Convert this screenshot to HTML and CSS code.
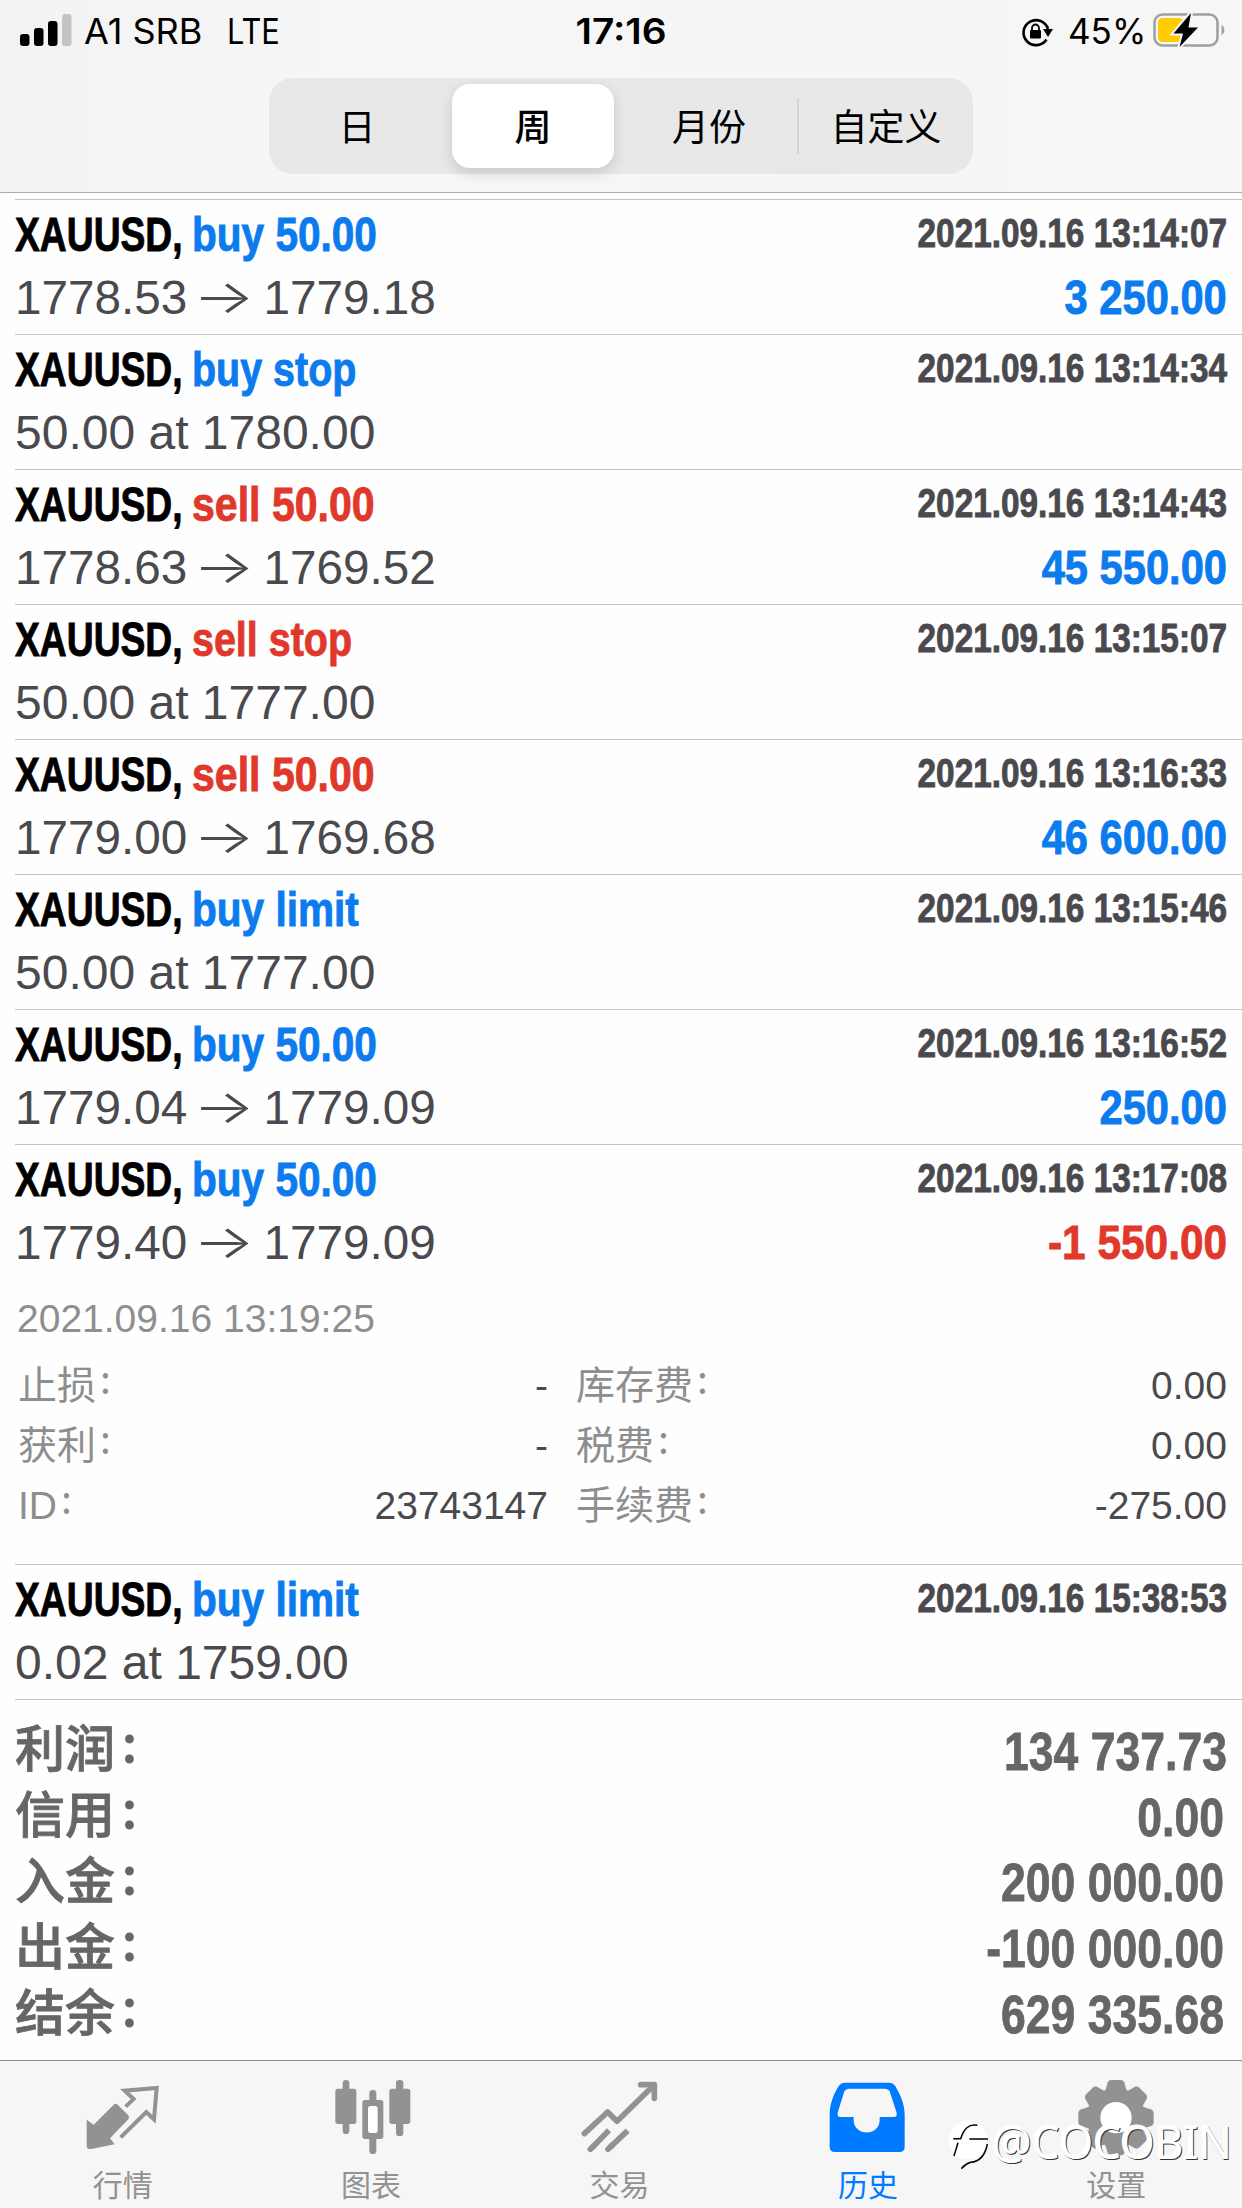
FILE: index.html
```html
<!DOCTYPE html>
<html lang="zh-CN">
<head>
<meta charset="utf-8">
<title>历史</title>
<link rel="stylesheet" href="styles.css">
</head>
<body>
<div class="app">
  <header class="top">
    <div class="status">
      <div class="status-left">
        <svg class="signal" viewBox="0 0 52 32"><rect x="0" y="20" width="9.5" height="12" rx="3"/><rect x="14" y="14" width="9.5" height="18" rx="3"/><rect x="28" y="7" width="9.5" height="25" rx="3"/><rect x="42" y="0" width="9.5" height="32" rx="3" fill="#c4c4c4"/></svg>
        <span class="carrier">A1 SRB</span><span class="network">LTE</span>
      </div>
      <div class="clock">17:16</div>
      <div class="status-right">
        <svg class="lock" viewBox="0 0 32 30"><path d="M25.5 22.5A12.5 12.5 0 1 1 27 12" fill="none" stroke="#000" stroke-width="2.6"/><path d="M22 12h10l-5 8z"/><rect x="9" y="13" width="11" height="8.500" rx="1"/><path d="M11 14v-3a3.500 3.500 0 0 1 7 0v3" fill="none" stroke="#000" stroke-width="1.8"/></svg>
        <span class="percent">45%</span>
        <svg class="battery" viewBox="0 0 74 36"><rect x="1.500" y="2.500" width="63" height="31" rx="8" fill="none" stroke="#a0a0a0" stroke-width="2.600"/><path d="M68.500 12.500q6 5.500 0 11z" fill="#a0a0a0"/><rect x="5" y="6" width="25" height="24" rx="4.500" fill="#ffcc00"/><path d="M38 1 20.500 21.500h9.500L26.500 35 45 15.500h-9.500z" stroke="#f6f6f6" stroke-width="4" paint-order="stroke"/></svg>
      </div>
    </div>
    <nav class="segments">
      <span class="seg">日</span><span class="seg seg-on">周</span><span class="seg">月份</span><span class="seg seg-split">自定义</span>
    </nav>
  </header>

  <main class="list">
    <section class="deal"><div class="line"><span class="symbol">XAUUSD,</span><span class="side buy">buy 50.00</span><time class="time">2021.09.16 13:14:07</time></div><div class="line"><span class="price">1778.53<i class="to">→</i>1779.18</span><span class="profit buy">3 250.00</span></div></section>
    <section class="deal"><div class="line"><span class="symbol">XAUUSD,</span><span class="side pending buy">buy stop</span><time class="time">2021.09.16 13:14:34</time></div><div class="line"><span class="price order">50.00 at 1780.00</span></div></section>
    <section class="deal"><div class="line"><span class="symbol">XAUUSD,</span><span class="side sell">sell 50.00</span><time class="time">2021.09.16 13:14:43</time></div><div class="line"><span class="price">1778.63<i class="to">→</i>1769.52</span><span class="profit buy">45 550.00</span></div></section>
    <section class="deal"><div class="line"><span class="symbol">XAUUSD,</span><span class="side pending sell">sell stop</span><time class="time">2021.09.16 13:15:07</time></div><div class="line"><span class="price order">50.00 at 1777.00</span></div></section>
    <section class="deal"><div class="line"><span class="symbol">XAUUSD,</span><span class="side sell">sell 50.00</span><time class="time">2021.09.16 13:16:33</time></div><div class="line"><span class="price">1779.00<i class="to">→</i>1769.68</span><span class="profit buy">46 600.00</span></div></section>
    <section class="deal"><div class="line"><span class="symbol">XAUUSD,</span><span class="side buy">buy limit</span><time class="time">2021.09.16 13:15:46</time></div><div class="line"><span class="price order">50.00 at 1777.00</span></div></section>
    <section class="deal"><div class="line"><span class="symbol">XAUUSD,</span><span class="side buy">buy 50.00</span><time class="time">2021.09.16 13:16:52</time></div><div class="line"><span class="price">1779.04<i class="to">→</i>1779.09</span><span class="profit buy">250.00</span></div></section>
    <section class="deal deal-open">
      <div class="line"><span class="symbol">XAUUSD,</span><span class="side buy">buy 50.00</span><time class="time">2021.09.16 13:17:08</time></div><div class="line"><span class="price">1779.40<i class="to">→</i>1779.09</span><span class="profit sell">-1 550.00</span></div>
      <div class="closed">2021.09.16 13:19:25</div>
      <div class="facts">
        <span class="key">止损<b class="colon">:</b></span><span class="val">-</span><span class="key">库存费<b class="colon">:</b></span><span class="val">0.00</span>
        <span class="key">获利<b class="colon">:</b></span><span class="val">-</span><span class="key">税费<b class="colon">:</b></span><span class="val">0.00</span>
        <span class="key">ID<b class="colon">:</b></span><span class="val">23743147</span><span class="key">手续费<b class="colon">:</b></span><span class="val">-275.00</span>
      </div>
    </section>
    <section class="deal"><div class="line"><span class="symbol">XAUUSD,</span><span class="side buy">buy limit</span><time class="time">2021.09.16 15:38:53</time></div><div class="line"><span class="price order">0.02 at 1759.00</span></div></section>
    <section class="totals">
      <div class="names"><span>利润<b class="colon">:</b></span><span>信用<b class="colon">:</b></span><span>入金<b class="colon">:</b></span><span>出金<b class="colon">:</b></span><span>结余<b class="colon">:</b></span></div>
      <div class="sums"><span class="first">134 737.73</span><span>0.00</span><span>200 000.00</span><span>-100 000.00</span><span>629 335.68</span></div>
    </section>
  </main>

  <nav class="tabs">
    <a class="tab"><svg viewBox="259 84 228 228"><path d="M378 170 402 147 375 122 471 114 463 208 440 186 363 262" fill="none" stroke="currentColor" stroke-width="12"/><path d="M342 164q6-5 12 0l32 32q5 6 0 12l-55 57 14 18-70 14q-14 1-14-10v-78l21 15z" fill="currentColor"/></svg><span>行情</span></a>
    <a class="tab"><svg viewBox="1004 84 228 228"><g fill="currentColor"><rect x="1027" y="90" width="20" height="162" rx="10"/><rect x="1005" y="116" width="63" height="106" rx="8"/><rect x="1107" y="120" width="21" height="192" rx="10"/><rect x="1086" y="150" width="63" height="117" rx="8"/><rect x="1187" y="90" width="22" height="168" rx="10"/><rect x="1167" y="116" width="63" height="106" rx="8"/></g><rect x="1103" y="168" width="29" height="81" rx="8" fill="#fff"/></svg><span>图表</span></a>
    <a class="tab"><svg viewBox="309 84 228 228"><g fill="none" stroke="currentColor" stroke-width="17"><path d="M313 251 383 186 411 214 520 107" stroke-linecap="round" stroke-linejoin="round"/><path d="M482 104h41v41" stroke-linecap="round" stroke-linejoin="round"/><path d="M336 293 387 241M389 293 443 242"/><path d="M331 298 345 284M384 298 398 284" stroke-linecap="round"/></g></svg><span>交易</span></a>
    <a class="tab tab-on"><svg viewBox="1054 84 228 228"><path fill="currentColor" fill-rule="evenodd" d="M1095 98H1228Q1240 98 1247 108C1265 140 1275 165 1275 195V290Q1275 306 1259 306H1066Q1050 306 1050 290V195C1050 165 1060 135 1077 108Q1084 98 1095 98ZM1108 116H1215Q1226 116 1230 124L1251 188Q1253 201 1243 201H1200V210C1200 260 1122 260 1122 210V201H1082Q1072 201 1074 188L1094 124Q1098 116 1108 116Z"/></svg><span>历史</span></a>
    <a class="tab"><svg viewBox="541 84 228 228"><defs><path id="tooth" d="M612 128Q620 118 622 104 624 90 636 90H662Q674 90 676 104 678 118 686 128V160H612Z"/></defs><g fill="currentColor"><circle cx="649" cy="203" r="85"/><use href="#tooth"/><use href="#tooth" transform="rotate(45 649 203)"/><use href="#tooth" transform="rotate(90 649 203)"/><use href="#tooth" transform="rotate(135 649 203)"/><use href="#tooth" transform="rotate(180 649 203)"/><use href="#tooth" transform="rotate(225 649 203)"/><use href="#tooth" transform="rotate(270 649 203)"/><use href="#tooth" transform="rotate(315 649 203)"/></g><circle cx="649" cy="203" r="47" fill="#fff"/></svg><span>设置</span></a>
  </nav>
  <div class="credit">
    <svg viewBox="24 30 126 147"><circle cx="84" cy="90" r="58" fill="#fff"/><g fill="none" stroke="#000" stroke-width="4.500"><path d="M112 46C85 42 72 56 62 86H40M54 98 42 138M88 87H144"/><path d="M142 102C135 140 115 155 92 157Q76 162 64 176"/></g></svg>
    <span>@COCOBIN</span>
  </div>
</div>
</body>
</html>
```
FILE: styles.css
```css
* { box-sizing: border-box; }
body { margin: 0; background: #fff; font-family: "Liberation Sans", "Noto Sans CJK SC", sans-serif; }
.app { position: relative; width: 1242px; height: 2208px; display: flex; flex-direction: column; overflow: hidden; background: #fefefe; }

.top { height: 193px; flex: none; background: linear-gradient(90deg, #f3f3f3, #f8f7f7 35%, #f5f5f5 65%, #f7f7f7); border-bottom: 1px solid #acacac; }
.status { height: 78px; padding: 0 15px 0 20px; display: grid; grid-template-columns: 1fr auto 1fr; font: 35px/62px Inter, sans-serif; color: #000; }
.status-left, .status-right { display: flex; align-items: flex-start; }
.status-right { justify-content: flex-end; }
.signal { width: 52px; height: 32px; margin: 14px 12px 0 0; }
.carrier { width: 143px; white-space: nowrap; transform: scaleX(1.03); transform-origin: left; }
.network { transform: scaleX(.88); transform-origin: left; }
.clock { margin-right: 4px; font-weight: 600; transform: scaleX(1.11); }
.lock { width: 32px; height: 30px; margin: 17px 15px 0 0; }
.percent { width: 85px; white-space: nowrap; }
.battery { width: 74px; height: 36px; margin-top: 12px; }
.segments { width: 704px; height: 96px; margin: 0 0 0 269px; display: grid; grid-template-columns: repeat(4, 1fr); align-items: center; border-radius: 24px; background: #e8e8e8; }
.seg { height: 84px; font: 37px/82px "Noto Sans CJK SC", sans-serif; text-align: center; color: #000; }
.seg-on { margin: 0 7px; border-radius: 18px; background: #fff; font-weight: 500; box-shadow: 0 5px 14px rgba(0,0,0,.14); }
.seg-split { height: 56px; line-height: 54px; border-left: 2px solid #d3d3d8; }

.list { flex: 1; padding: 6px 0 0 15px; }
.deal { height: 135px; padding: 7px 15px 0 0; border-top: 1px solid #c2c2c2; }
.deal-open { height: 420px; }
.line { height: 63px; display: flex; align-items: baseline; font-size: 49px; line-height: 54px; white-space: nowrap; }
.symbol, .side, .profit, .time { -webkit-text-stroke: .9px currentColor; }
.symbol { width: 177px; font-weight: 700; color: #000; transform: scaleX(.76); transform-origin: left; }
.side { font-weight: 700; transform: scaleX(.828); transform-origin: left; }
.side.pending { transform: scaleX(.805); }
.buy { color: #0b7bee; }
.sell { color: #e0392b; }
.side.sell:not(.pending) { transform: scaleX(.838); }
.time { align-self: flex-start; margin-left: auto; font-size: 40.5px; line-height: 53px; font-weight: 700; color: #4a4a4e; transform: scaleX(.823); transform-origin: right; }
.price { font-size: 47.700px; color: #4a4a4e; }
.price.order { font-size: 48px; padding-top: 1px; }
.to { display: inline-block; width: 76px; text-align: center; font: normal 300 47px/40px Inter, sans-serif; transform: translate(-1px, -1px) scaleX(1.38); }
.profit { margin-left: auto; font-weight: 700; transform: scaleX(.85); transform-origin: right; }
.profit.sell { transform: scaleX(.865); }
.closed { height: 60px; padding: 19px 0 0 2px; font-size: 39px; line-height: 44px; color: #8e8e8e; }
.facts { padding: 18px 0 0 3px; display: grid; grid-template-columns: 200px 330px 231px 1fr; grid-auto-rows: 60px; font-size: 39px; line-height: 60px; }
.key { color: #8e8e8e; white-space: nowrap; }
.key:nth-child(4n + 3) { padding-left: 28px; }
.val { color: #4a4a4e; text-align: right; }
.colon { font: inherit; font-family: "Noto Sans CJK SC", sans-serif; vertical-align: 5px; padding-left: 4px; line-height: 1; }
.totals { padding: 12px 15px 0 0; display: flex; justify-content: space-between; border-top: 1px solid #c2c2c2; color: #666; font-weight: 700; }
.names, .sums { display: flex; flex-direction: column; }
.names { font: 500 50px/66px "Noto Sans CJK SC", sans-serif; -webkit-text-stroke: .8px currentColor; }
.names .colon { padding-left: 7px; }
.sums { padding: 7px 3px 0 0; font-size: 53px; line-height: 65.700px; text-align: right; -webkit-text-stroke: .8px currentColor; }
.sums span { transform: scaleX(.84); transform-origin: right; }
.sums .first { transform: translateX(3px) scaleX(.84); }

.tabs { height: 148px; flex: none; display: grid; grid-template-columns: repeat(5, 1fr); background: #f6f6f6; border-top: 1px solid #8c8c8c; color: #929292; }
.tab { display: flex; flex-direction: column; align-items: center; padding-top: 17px; }
.tab svg { width: 76px; height: 76px; flex: none; overflow: visible; }
.tab span { margin: 7px 3px 0 0; font: 30px/44px "Noto Sans CJK SC", sans-serif; }
.tab-on { color: #007aff; }

.credit { position: absolute; left: 948px; top: 2120px; display: flex; }
.credit svg { width: 42px; height: 49px; }
.credit span { margin: -7px 0 0 2px; font: 400 46px/56px "Noto Sans", sans-serif; color: #fff; text-shadow: 1px 1px 0 #333, -1px -1px 0 #fff; white-space: nowrap; transform: scaleX(.96); transform-origin: left; }
```
